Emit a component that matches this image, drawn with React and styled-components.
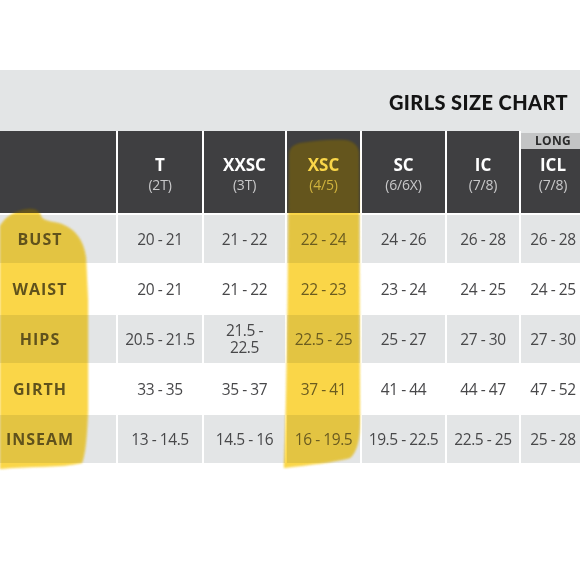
import React from "react";
import styled, { createGlobalStyle } from "styled-components";

const GlobalStyle = createGlobalStyle`
	body {
		margin: 0;
		background: #ffffff;
		font-family: "Open Sans", "Liberation Sans", sans-serif;
	}
`;

const Page = styled.div`
	position: relative;
	width: 580px;
	height: 580px;
	overflow: hidden;
	background: #ffffff;
	padding-top: 70px;
	box-sizing: border-box;
`;

const TitleBar = styled.div`
	height: 61px;
	background: #e3e5e6;
	display: flex;
	align-items: center;
	justify-content: flex-end;
	padding-right: 12px;
`;

const Title = styled.h1`
	margin: 0;
	font-family: "Lato", "DejaVu Sans", sans-serif;
	font-weight: 900;
	font-size: 20px;
	letter-spacing: 0.4px;
	color: #141414;
	padding-top: 2px;
`;

const Table = styled.div`
	display: grid;
	width: 585px;
	grid-template-columns: 116px 84px 81px 73px 83px 72px 64px;
	grid-template-rows: 82px repeat(5, 48px);
	column-gap: 2px;
	row-gap: 2px;
	background: #ffffff;
`;

const HeadCell = styled.div`
	display: grid;
	grid-template-rows: 18px 1fr 14px;
	background: #3f3f41;
	color: #ffffff;
	text-align: center;
`;

const Tag = styled.div`
	border-top: 2px solid #e3e5e6;
	background: #c3c4c5;
	color: #2a2a2a;
	font-weight: 700;
	font-size: 12px;
	line-height: 16px;
	letter-spacing: 0.3px;
`;

const HeadBody = styled.div`
	display: flex;
	flex-direction: column;
	justify-content: center;
	align-items: center;
`;

const Size = styled.span`
	font-weight: 700;
	font-size: 17px;
	line-height: 20px;
`;

const Sub = styled.span`
	font-size: 14px;
	line-height: 19px;
	color: #c9c9ca;
	letter-spacing: -0.2px;
`;

const Cell = styled.div`
	display: flex;
	align-items: center;
	justify-content: center;
	text-align: center;
	background: ${props => (props.$shade ? "#e3e5e6" : "#ffffff")};
	color: #48484a;
	font-size: 15.5px;
	letter-spacing: -0.45px;
	line-height: 17px;
	white-space: pre-line;
`;

const Label = styled(Cell)`
	padding-right: 36px;
	color: #3a3a3a;
	font-weight: 700;
	font-size: 16px;
	letter-spacing: 1px;
`;

const Marker = styled.svg`
	position: absolute;
	top: 0;
	left: 0;
	pointer-events: none;
	filter: blur(0.8px);
	mix-blend-mode: ${props => (props.$glow ? "normal" : "multiply")};
	opacity: ${props => (props.$glow ? 0.2 : 1)};
`;

const columns = [
	{ size: "T", sub: "(2T)" },
	{ size: "XXSC", sub: "(3T)" },
	{ size: "XSC", sub: "(4/5)" },
	{ size: "SC", sub: "(6/6X)" },
	{ size: "IC", sub: "(7/8)" },
	{ size: "ICL", sub: "(7/8)", tag: "LONG" },
];

const rows = [
	{ label: "BUST", values: ["20 - 21", "21 - 22", "22 - 24", "24 - 26", "26 - 28", "26 - 28"] },
	{ label: "WAIST", values: ["20 - 21", "21 - 22", "22 - 23", "23 - 24", "24 - 25", "24 - 25"] },
	{ label: "HIPS", values: ["20.5 - 21.5", "21.5 -\n22.5", "22.5 - 25", "25 - 27", "27 - 30", "27 - 30"] },
	{ label: "GIRTH", values: ["33 - 35", "35 - 37", "37 - 41", "41 - 44", "44 - 47", "47 - 52"] },
	{ label: "INSEAM", values: ["13 - 14.5", "14.5 - 16", "16 - 19.5", "19.5 - 22.5", "22.5 - 25", "25 - 28"] },
];

const strokes = [
	"M0,226 C6,216 16,210 28,209 C36,208 40,212 41,216 C42,220 48,221 58,223 C74,227 84,240 86,258 L88,300 L88,410 C87,440 85,455 82,463 C60,468 30,466 0,469 Z",
	"M289,155 C289,148 293,145 300,143 C315,141 330,139 345,140 C354,141 358,146 359,152 L360,420 C360,440 357,452 350,458 C335,462 310,465 284,468 C286,440 288,300 288,250 Z",
];

function Highlighter({ glow }) {
	return (
		<Marker $glow={glow} width="580" height="580" viewBox="0 0 580 580">
			{strokes.map(d => (
				<path key={d} d={d} fill="#fad648" />
			))}
		</Marker>
	);
}

export default function App() {
	return (
		<Page>
			<GlobalStyle />
			<TitleBar>
				<Title>GIRLS SIZE CHART</Title>
			</TitleBar>
			<Table>
				<HeadCell />
				{columns.map(col => (
					<HeadCell key={col.size}>
						{col.tag ? <Tag>{col.tag}</Tag> : <div />}
						<HeadBody>
							<Size>{col.size}</Size>
							<Sub>{col.sub}</Sub>
						</HeadBody>
					</HeadCell>
				))}
				{rows.map((row, i) => (
					<React.Fragment key={row.label}>
						<Label $shade={i % 2 === 0}>{row.label}</Label>
						{row.values.map((v, j) => (
							<Cell key={j} $shade={i % 2 === 0}>
								{v}
							</Cell>
						))}
					</React.Fragment>
				))}
			</Table>
			<Highlighter />
			<Highlighter glow />
		</Page>
	);
}
